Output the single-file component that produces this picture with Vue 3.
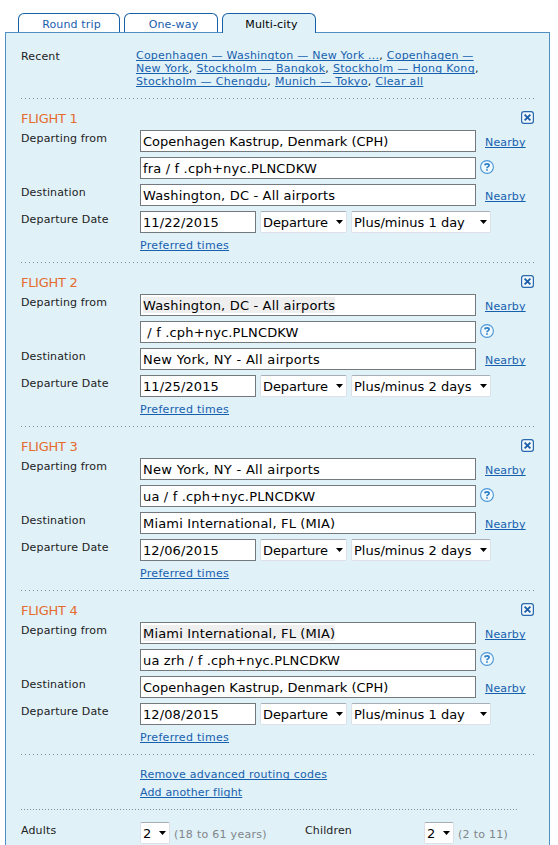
<script setup>
const tabs = [
  { label: 'Round trip', cls: 'wide' },
  { label: 'One-way', cls: '' },
  { label: 'Multi-city', cls: 'active' }
]
const CPH = { name: 'Copenhagen Kastrup, Denmark (CPH)', fit: '' }
const WAS = { name: 'Washington, DC - All airports', fit: 'airy' }
const NYC = { name: 'New York, NY - All airports', fit: 'loose' }
const MIA = { name: 'Miami International, FL (MIA)', fit: 'airy' }
const flights = [
  { from: CPH, code: 'fra / f .cph+nyc.PLNCDKW', to: WAS, date: '11/22/2015', flex: 'Plus/minus 1 day' },
  { from: WAS, code: ' / f .cph+nyc.PLNCDKW', to: NYC, date: '11/25/2015', flex: 'Plus/minus 2 days', marked: true },
  { from: NYC, code: 'ua / f .cph+nyc.PLNCDKW', to: MIA, date: '12/06/2015', flex: 'Plus/minus 2 days' },
  { from: MIA, code: 'ua zrh / f .cph+nyc.PLNCDKW', to: CPH, date: '12/08/2015', flex: 'Plus/minus 1 day', marked: true }
]
</script>

<template>
  <div class="page">
    <nav class="tabs">
      <a v-for="t in tabs" :key="t.label" class="tab" :class="t.cls"><span>{{ t.label }}</span></a>
    </nav>
    <main class="panel">
      <section class="recent">
        <span class="label">Recent</span>
        <div class="recent-links">
          <div class="line1"><a>Copenhagen — Washington — New York ...</a>, <a>Copenhagen —</a></div>
          <div class="line2"><a>New York</a>, <a>Stockholm — Bangkok</a>, <a>Stockholm — Hong Kong</a>,</div>
          <div class="line3"><a>Stockholm — Chengdu</a>, <a>Munich — Tokyo</a>, <a>Clear all</a></div>
        </div>
      </section>
      <section v-for="(f, i) in flights" :key="i" class="flight">
        <header class="head">
          <h2>FLIGHT {{ i + 1 }}</h2>
          <svg class="close" width="13" height="13" viewBox="0 0 13 13">
            <rect x=".6" y=".6" width="11.8" height="11.8" rx="2.4" fill="#f0f8fc" stroke="#2a69ad" stroke-width="1.2" />
            <path d="M3.6 3.6l5.8 5.8M9.4 3.6l-5.8 5.8" stroke="#1f5fa8" stroke-width="1.9" />
          </svg>
        </header>
        <div class="row">
          <span class="label">Departing from</span>
          <div class="field"><span :class="[f.from.fit, { marked: f.marked }]">{{ f.from.name }}</span></div>
          <a class="nearby">Nearby</a>
        </div>
        <div class="row">
          <span class="label"></span>
          <div class="field"><span class="code">{{ f.code }}</span></div>
          <svg class="help" width="14" height="14" viewBox="0 0 14 14">
            <circle cx="7" cy="7" r="6.4" fill="#f0f9fd" stroke="#4a96d6" stroke-width="1.1" />
            <path d="M4.9 5.4Q5 3.8 7 3.8Q9.1 3.8 9.1 5.3Q9.1 6.2 8 6.7Q7 7.1 7 8.2M7 9.2V10.8" fill="none" stroke="#2f80c8" stroke-width="1.7" />
          </svg>
        </div>
        <div class="row">
          <span class="label">Destination</span>
          <div class="field"><span :class="f.to.fit">{{ f.to.name }}</span></div>
          <a class="nearby">Nearby</a>
        </div>
        <div class="row">
          <span class="label">Departure Date</span>
          <div class="field date"><span>{{ f.date }}</span></div>
          <div class="select time"><span>Departure</span><svg width="7" height="4" viewBox="0 0 7 4"><path d="M0 0h7L3.5 4z" /></svg></div>
          <div class="select flex"><span>{{ f.flex }}</span><svg width="7" height="4" viewBox="0 0 7 4"><path d="M0 0h7L3.5 4z" /></svg></div>
        </div>
        <a class="preferred">Preferred times</a>
      </section>
      <section class="actions">
        <a class="remove">Remove advanced routing codes</a>
        <a class="add">Add another flight</a>
      </section>
      <section class="people">
        <span class="label">Adults</span>
        <div class="select num"><span>2</span><svg width="7" height="4" viewBox="0 0 7 4"><path d="M0 0h7L3.5 4z" /></svg></div>
        <span class="hint adults">(18 to 61 years)</span>
        <span class="label">Children</span>
        <div class="select num"><span>2</span><svg width="7" height="4" viewBox="0 0 7 4"><path d="M0 0h7L3.5 4z" /></svg></div>
        <span class="hint">(2 to 11)</span>
      </section>
    </main>
  </div>
</template>

<style>
body { background: #fff; }
</style>

<style scoped>
* { box-sizing: border-box; }
.page { width: 558px; height: 845px; overflow: hidden; padding: 13px 8px 0 5px; display: flex; flex-direction: column; font: 11px/13px Verdana, "DejaVu Sans", sans-serif; color: #222; white-space: pre; }
a { color: #1660ae; text-decoration: underline; text-decoration-thickness: 1px; text-underline-offset: 1px; text-decoration-skip-ink: none; }
.tabs { display: flex; gap: 4px; padding-left: 13px; height: 19px; flex: none; position: relative; z-index: 1; }
.tab { width: 94px; height: 19px; border: 1px solid #1660a8; border-bottom: 0; border-radius: 6px 6px 0 0; background: #fff; text-align: center; line-height: 22px; text-decoration: none; padding-left: 5px; letter-spacing: .15px; }
.tab.wide { width: 102px; }
.tab.active { height: 20px; background: #e0f1f8; color: #000; }
.panel { flex: none; height: 830px; border: 1px solid #4f8fc4; background: #e0f1f8; padding: 0 14px 0 15px; }
.recent, .flight, .actions { background: repeating-linear-gradient(90deg, #7f8c92 0 1px, transparent 1px 4px) left bottom / 100% 1px no-repeat; }
.recent { display: flex; height: 66px; padding-top: 16px; }
.recent .label { padding-top: 1px; }
.label { width: 119px; flex: none; letter-spacing: .15px; }
.recent-links { margin-left: -4px; }
.line1 { letter-spacing: .23px; }
.line2 { letter-spacing: .3px; }
.line3 { letter-spacing: .32px; }
.flight { height: 164px; padding-top: 12px; }
.head { display: flex; justify-content: space-between; height: 19px; }
h2 { margin: 0; font-size: 13px; line-height: 15px; font-weight: 400; color: #e56b2f; letter-spacing: -.3px; }
.close { margin-right: 1px; }
.row { display: flex; height: 27px; }
.row .label { padding-top: 2px; }
.field { width: 336px; height: 22px; border: 1px solid #73797d; background: #fff; color: #000; font-size: 13px; line-height: 20px; padding-left: 2px; }
.field span { display: inline-block; height: 16px; line-height: 18px; vertical-align: top; margin-top: 2px; }
.field .airy { letter-spacing: .17px; }
.field .loose { letter-spacing: .3px; }
.field .code { letter-spacing: .17px; }
.marked { background: #efefef; }
.date { width: 116px; letter-spacing: .1px; }
.nearby { margin: 6px 0 0 9px; letter-spacing: .15px; }
.help { margin: 3px 0 0 4px; }
.select { height: 22px; border: 1px solid #dde0e8; border-top-color: #a9adb5; border-radius: 2px; background: #fff; color: #000; font-size: 13px; line-height: 18px; display: flex; justify-content: space-between; align-items: center; padding: 0 3px 0 2px; margin-left: 4px; }
.select span { padding-top: 2px; }
.time { width: 87px; letter-spacing: -.12px; }
.flex { width: 140px; }
.preferred { display: block; width: max-content; margin: 1px 0 0 119px; letter-spacing: .3px; }
.actions { height: 55px; padding: 13px 0 0 119px; display: flex; flex-direction: column; align-items: flex-start; gap: 5px; background-size: 497px 1px; background-image: repeating-linear-gradient(90deg, #7f8c92 0 1px, transparent 1px 3px); }
.remove { letter-spacing: .23px; }
.add { letter-spacing: .15px; }
.people { display: flex; padding-top: 12px; }
.people .label { padding-top: 2px; }
.num { width: 30px; margin: 0; }
.hint { color: #808588; padding: 6px 0 0 4px; letter-spacing: .28px; }
.adults { width: 135px; }
</style>
